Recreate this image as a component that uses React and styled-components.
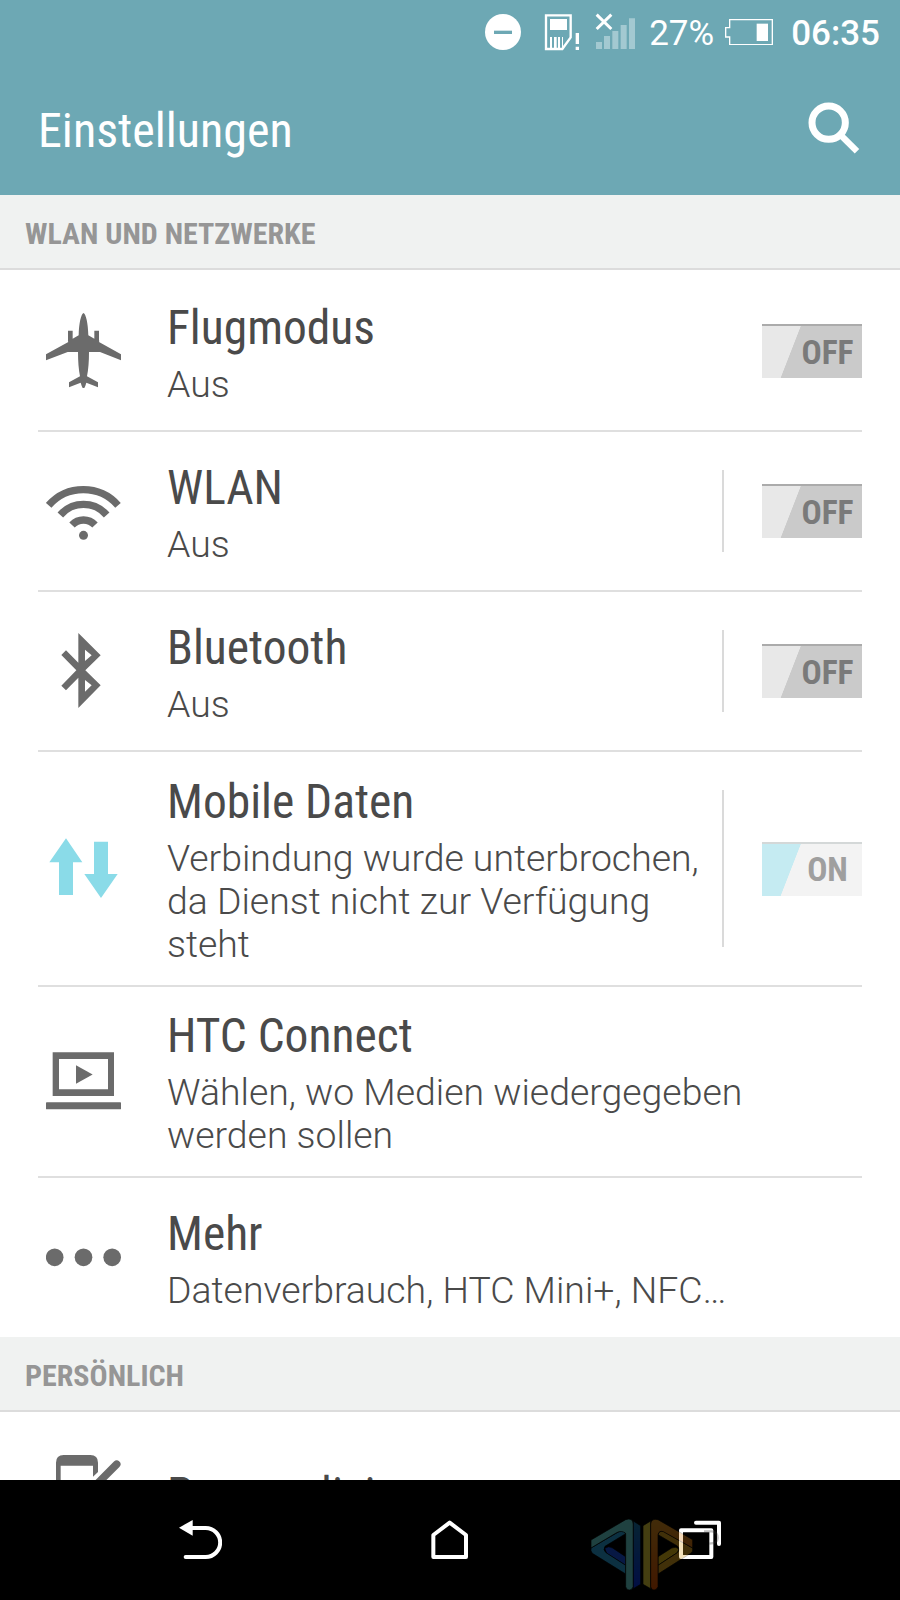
import React, { useState } from 'react';
import styled, { createGlobalStyle } from 'styled-components';

const GlobalStyle = createGlobalStyle`
  * {
    box-sizing: border-box;
  }
  body {
    margin: 0;
    background: #fff;
    font-family: Roboto, 'Liberation Sans', sans-serif;
  }
`

const Phone = styled.div`
  display: flex;
  flex-direction: column;
  width: 900px;
  height: 1600px;
  overflow: hidden;
  background: #fff;
`

const Header = styled.header`
  flex: none;
  height: 195px;
  background: #6da8b4;
  color: #fff;
`

const StatusBar = styled.div`
  display: flex;
  align-items: center;
  justify-content: flex-end;
  height: 64px;
  padding-right: 20px;
`

const StatusIcons = styled.svg`
  display: block;
  margin-right: 13px;
`

const Percent = styled.span`
  font-size: 35px;
  margin-right: 11px;
  padding-top: 2px;
`

const Clock = styled.span`
  font-size: 35px;
  font-weight: 500;
  margin-left: 18px;
  padding-top: 2px;
`

const TitleBar = styled.div`
  display: flex;
  align-items: center;
  justify-content: space-between;
  height: 131px;
  padding: 0 40px 4px 38px;
`

const Condensed = styled.span`
  display: block;
  font-family: 'Roboto Condensed', Roboto, sans-serif;
  font-stretch: 75%;
  white-space: nowrap;
`

const PageTitle = styled(Condensed)`
  font-size: 48px;
  padding-top: 6px;
`

const SectionHeader = styled.div`
  flex: none;
  height: 75px;
  padding: 21px 0 0 25px;
  background: #f0f2f1;
  border-bottom: 2px solid #dcdcdc;
`

const SectionTitle = styled(Condensed)`
  font-size: 30px;
  font-weight: 700;
  color: #969696;
`

const List = styled.div`
  flex: none;
  display: flex;
  flex-direction: column;
  padding: 0 38px;
`

const Row = styled.div`
  display: flex;
  align-items: center;
  height: ${props => props.$height}px;
  border-top: 2px solid ${props => (props.$first ? 'transparent' : '#dfdfdf')};
`

const IconBox = styled.div`
  flex: none;
  display: flex;
  width: 129px;
  padding: 0 0 1px 8px;
`

const RowText = styled.div`
  flex: 1;
  min-width: 0;
  padding-top: ${props => (props.$tall ? 2 : 4)}px;
  color: #4a4a4a;
`

const RowTitle = styled(Condensed)`
  font-size: 47.5px;
  line-height: 56px;
`

const Summary = styled.p`
  margin: 7px 0 0;
  font-size: 37.4px;
  font-weight: 300;
  line-height: 43px;
  white-space: pre;
`

const Divider = styled.div`
  flex: none;
  align-self: stretch;
  width: 2px;
  margin: 38px 38px 38px 0;
  background: #dadada;
`

const Toggle = styled.button`
  flex: none;
  display: flex;
  align-items: center;
  justify-content: flex-end;
  width: 100px;
  height: 54px;
  padding: 0;
  border: 0;
  border-top: 2px solid ${props => (props.$on ? '#d4d8d8' : '#ababab')};
  background: ${props => props.$on
    ? 'linear-gradient(111.25deg, #c5ebf2 32%, #f3f3f3 32.6%)'
    : 'linear-gradient(111.25deg, #e8e8e8 32%, #cacaca 32.6%)'};
  color: ${props => (props.$on ? '#9f9f9f' : '#7a7a7a')};
`

const ToggleLabel = styled(Condensed)`
  width: 69px;
  font-size: 33.5px;
  font-weight: 700;
  text-align: center;
`

const Clip = styled.div`
  flex: none;
  height: 68px;
  overflow: hidden;
`

const NavBar = styled.nav`
  position: relative;
  flex: none;
  display: flex;
  justify-content: space-between;
  height: 120px;
  padding: 40px 179px 0;
  background: #000;
`

const Logo = styled.svg`
  position: absolute;
  left: 590px;
  top: 37px;
  opacity: 0.3;
`

const PlaneIcon = () => (
  <svg width="75" height="75" viewBox="138 130 225 225" fill="#6b6b6b">
    <path d="M250.500 130C258 134 264 160 265 197L283 207V183H297V211Q299 215 297 217L363 254V272L300 247H267Q267 290 261 320L294 338V353L259 339Q256 350 253 355H248Q245 350 242 339L207 353V338L240 320Q234 290 234 247H203L138 272V254L205 217Q203 215 204 211V183H218V207L236 197C237 160 243 134 250.500 130Z" />
  </svg>
)

const WifiIcon = () => (
  <svg width="75" height="75" viewBox="138 610 225 225" fill="none" stroke="#6b6b6b" strokeWidth="22">
    <path d="M146 707A138.600 138.600 0 0 1 354 707" />
    <path d="M181 736A91.500 91.500 0 0 1 320 736" />
    <path d="M216 766A47 47 0 0 1 285 766" />
    <circle cx="250.500" cy="797" r="13.500" fill="#6b6b6b" stroke="none" />
  </svg>
)

const BluetoothIcon = () => (
  <svg width="75" height="75" viewBox="138 130 225 225">
    <path fill="#6b6b6b" fillRule="evenodd" d="M235 130L302 197L256 242L302 287L235 355V264L198 302L184 288L229 242L184 196L198 182L235 219ZM255 180V214L275 197ZM255 271V306L275 287Z" />
  </svg>
)

const DataIcon = () => (
  <svg width="75" height="75" viewBox="138 723 225 225" fill="#8adbe8">
    <path d="M198 745L247 817H219V915H177V817H148Z" />
    <path d="M282 755H324V852H353L303 924L253 852H282Z" />
  </svg>
)

const CastIcon = () => (
  <svg width="75" height="75" viewBox="138 191 225 225" fill="#6b6b6b">
    <path fillRule="evenodd" d="M158 216H342V347H158ZM177 236V327H324V236Z" />
    <path d="M228 255L278 282.500L228 310Z" />
    <rect x="138" y="366" width="225" height="21" rx="2" />
  </svg>
)

const MoreIcon = () => (
  <svg width="75" height="75" viewBox="138 719 225 225" fill="#6b6b6b">
    <circle cx="164" cy="831" r="26.500" />
    <circle cx="250.500" cy="831" r="26.500" />
    <circle cx="336.500" cy="831" r="26.500" />
  </svg>
)

const PersonalizeIcon = () => (
  <svg width="75" height="75" viewBox="138 377 225 225">
    <path fill="#6b6b6b" fillRule="evenodd" d="M168 400Q168 377 191 377H271Q294 377 294 400V428L279 442V409H182V590H168Z" />
    <path stroke="#6b6b6b" strokeWidth="23" strokeLinecap="round" d="M350 405L270 485" />
  </svg>
)

const SearchIcon = () => (
  <svg width="52" height="52" viewBox="1013 303 156 156" fill="none" stroke="#fff">
    <circle cx="1075" cy="365" r="50" strokeWidth="21" />
    <path d="M1113 404L1160 451" strokeWidth="19" />
  </svg>
)

const networkRows = [
  { title: 'Flugmodus', summary: 'Aus', icon: <PlaneIcon />, height: 160, toggle: true },
  { title: 'WLAN', summary: 'Aus', icon: <WifiIcon />, height: 160, toggle: true, divider: true },
  { title: 'Bluetooth', summary: 'Aus', icon: <BluetoothIcon />, height: 160, toggle: true, divider: true },
  {
    title: 'Mobile Daten',
    summary: 'Verbindung wurde unterbrochen,\nda Dienst nicht zur Verfügung\nsteht',
    icon: <DataIcon />,
    height: 235,
    toggle: true,
    divider: true,
    on: true,
    tall: true,
  },
  { title: 'HTC Connect', summary: 'Wählen, wo Medien wiedergegeben\nwerden sollen', icon: <CastIcon />, height: 191, tall: true },
  { title: 'Mehr', summary: 'Datenverbrauch, HTC Mini+, NFC…', icon: <MoreIcon />, height: 161, tall: true },
]

const SettingRow = ({ item, first }) => {
  const [on, setOn] = useState(!!item.on);

  return (
    <Row $height={item.height} $first={first}>
      <IconBox>{item.icon}</IconBox>
      <RowText $tall={item.tall}>
        <RowTitle>{item.title}</RowTitle>
        {item.summary && <Summary>{item.summary}</Summary>}
      </RowText>
      {item.divider && <Divider />}
      {item.toggle && (
        <Toggle $on={on} onClick={() => setOn(!on)}>
          <ToggleLabel>{on ? 'ON' : 'OFF'}</ToggleLabel>
        </Toggle>
      )}
    </Row>
  )
}

const App = () => {
  return (
    <Phone>
      <GlobalStyle />
      <Header>
        <StatusBar>
          <StatusIcons width="151" height="40" viewBox="45 33 453 120">
            <circle cx="99" cy="93" r="54" fill="#fff" />
            <rect x="72" y="89" width="54" height="10" fill="#6da8b4" />
            <path d="M228 43H302V109L277 144H228Z" fill="none" stroke="#fff" strokeWidth="7" />
            <path d="M240 54H291V87H240ZM240 108H246V144H240ZM252 108H260V144H252ZM264 108H270V144H264ZM276 108H279V144H276ZM317 96H327V129H317ZM317 137H327V147H317Z" fill="#fff" />
            <path d="M378 123H396V144H378ZM402 105H420V144H402ZM427 90H445V144H427ZM452 72H470V144H452ZM477 52H495V144H477Z" fill="#a3c9d1" />
            <path d="M380 41L424 84M424 41L380 84" stroke="#fff" strokeWidth="9" />
          </StatusIcons>
          <Percent>27%</Percent>
          <svg width="48" height="26" viewBox="765 54 144 78">
            <path d="M779 56H907V131H779V108H767V80H779Z" fill="none" stroke="#fff" strokeWidth="4" />
            <rect x="860" y="68" width="34" height="52" fill="#fff" />
          </svg>
          <Clock>06:35</Clock>
        </StatusBar>
        <TitleBar>
          <PageTitle>Einstellungen</PageTitle>
          <SearchIcon />
        </TitleBar>
      </Header>

      <SectionHeader><SectionTitle>WLAN UND NETZWERKE</SectionTitle></SectionHeader>
      <List>
        {networkRows.map((item, i) => (
          <SettingRow key={item.title} item={item} first={i === 0} />
        ))}
      </List>

      <SectionHeader><SectionTitle>PERSÖNLICH</SectionTitle></SectionHeader>
      <Clip>
        <List>
          <SettingRow first item={{ title: 'Personalisieren', icon: <PersonalizeIcon />, height: 160 }} />
        </List>
      </Clip>

      <NavBar>
        <svg width="43" height="40" viewBox="538 570 129 120">
          <path d="M538 593L579 570V617Z" fill="#fff" />
          <path d="M575 594H618A43.500 43.500 0 0 1 618 681H558" fill="none" stroke="#fff" strokeWidth="12" strokeLinecap="round" />
        </svg>
        <svg width="39" height="40" viewBox="34 180 117 120">
          <path d="M41 291V225L90 188L139 225V291Z" fill="none" stroke="#fff" strokeWidth="12" strokeLinejoin="round" />
        </svg>
        <svg width="42" height="40" viewBox="777 180 126 120">
          <path d="M783 211H874V291H783Z" fill="none" stroke="#fff" strokeWidth="12" strokeLinejoin="round" />
          <path d="M828 188H897V252" fill="none" stroke="#fff" strokeWidth="12" strokeLinecap="round" strokeLinejoin="round" />
        </svg>
        <Logo width="130" height="75" viewBox="510 171 390 225">
          <defs>
            <linearGradient id="blueSide" x1="0" y1="0" x2="0" y2="1">
              <stop offset="0" stopColor="#1878a8" />
              <stop offset="1" stopColor="#0830e0" />
            </linearGradient>
            <linearGradient id="orangeStem" x1="0" y1="0" x2="0" y2="1">
              <stop offset="0" stopColor="#d89020" />
              <stop offset="1" stopColor="#d85000" />
            </linearGradient>
          </defs>
          <g stroke="#000" strokeWidth="2">
            <path fill="#1850e0" d="M554 265Q566 256 578 264L617 290V316L560 280Z" />
            <path fill="#28a0d8" d="M513 264L600 213Q612 211 617 221L555 259Q548 270 558 278L617 316V342L517 280Q511 272 513 264Z" />
            <path fill="#68d8d4" d="M513 240L617 179Q638 172 640 192V380Q636 390 628 390Q619 390 617 380V220Q605 210 590 218L513 264Z" />
            <path fill="url(#blueSide)" d="M640 183L662 197V373L640 386Z" />
            <path fill="#e0cc38" d="M669 197L692 183V386L669 373Z" />
            <path fill="#e0b818" d="M714 290L755 264Q768 258 777 267L772 278L714 316Z" />
            <path fill="#d8a020" d="M714 224Q717 211 730 214L818 264Q820 275 812 280L714 342V316L772 278Q782 268 772 258Z" />
            <path fill="url(#orangeStem)" d="M692 192Q694 174 714 179L818 239V264L730 215Q717 211 714 224V380Q710 390 702 390Q694 390 692 380Z" />
          </g>
          <path d="M852 214H876Q893 216 893 234Q893 250 868 251" fill="none" stroke="#333" strokeWidth="7" />
        </Logo>
      </NavBar>
    </Phone>
  );
}

export default App;
